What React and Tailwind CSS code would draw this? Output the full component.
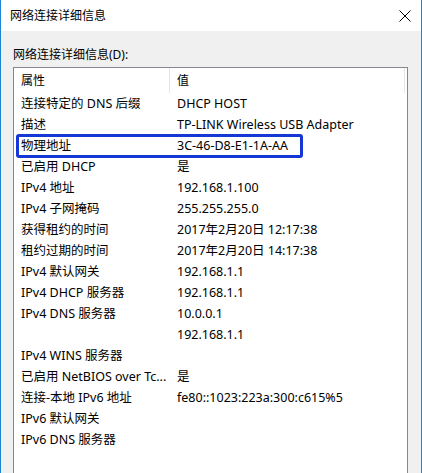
const rows = [
  ["连接特定的 DNS 后缀", "DHCP HOST"],
  ["描述", "TP-LINK Wireless USB Adapter"],
  ["物理地址", "3C-46-D8-E1-1A-AA", true],
  ["已启用 DHCP", "是"],
  ["IPv4 地址", "192.168.1.100"],
  ["IPv4 子网掩码", "255.255.255.0"],
  ["获得租约的时间", "2017年2月20日 12:17:38"],
  ["租约过期的时间", "2017年2月20日 14:17:38"],
  ["IPv4 默认网关", "192.168.1.1"],
  ["IPv4 DHCP 服务器", "192.168.1.1"],
  ["IPv4 DNS 服务器", "10.0.0.1"],
  ["", "192.168.1.1"],
  ["IPv4 WINS 服务器", ""],
  ["已启用 NetBIOS over Tc...", "是"],
  ["连接-本地 IPv6 地址", "fe80::1023:223a:300:c615%5"],
  ["IPv6 默认网关", ""],
  ["IPv6 DNS 服务器", ""],
];

export default function App() {
  return (
    <div
      className="w-[422px] h-[473px] overflow-hidden flex flex-col border-x border-[#1b86d8] bg-[#f0f0f0] text-[12px] text-black"
      style={{ fontFamily: '"Noto Sans", "Noto Sans CJK SC", sans-serif' }}
    >
      {/* title bar */}
      <div className="h-[31px] shrink-0 bg-white flex items-center justify-between pl-[9px] pr-[8px]">
        <span>网络连接详细信息</span>
        <svg width="12" height="12" viewBox="0 0 12 12" className="mr-[2px]">
          <path d="M0.5 0.5 L11.5 11.5 M11.5 0.5 L0.5 11.5" stroke="#000" strokeWidth="1" />
        </svg>
      </div>

      <div className="flex-1 flex flex-col pl-[12px] pr-[13px] pt-[15px] min-h-0">
        <div className="h-[18px] leading-[18px] mb-[3px]">网络连接详细信息(D):</div>

        <div className="flex-1 bg-white border border-[#828790] border-b-0 min-h-0">
          {/* header */}
          <div className="h-[25px] flex items-center border-r border-[#e5e5e5] mr-[2px]">
            <div className="w-[156px] h-full flex items-center pl-[7px] pt-[1px] border-r border-[#e5e5e5]">属性</div>
            <div className="pl-[7px] pt-[1px]">值</div>
          </div>

          <div className="pt-[1px] px-[3px] text-[12.5px]">
            {rows.map(([k, v, sel], i) => (
              <div key={i} className="relative h-[21px] flex items-center">
                {sel && (
                  <span className="absolute -top-[2px] -left-[1px] w-[287px] h-[24px] rounded-[3px] border-[3px] border-[#1437d6]" />
                )}
                <div className="w-[157px] pl-[4px] whitespace-nowrap">{k}</div>
                <div className="pl-[3px] whitespace-nowrap">{v}</div>
              </div>
            ))}
          </div>
        </div>
      </div>
    </div>
  );
}
